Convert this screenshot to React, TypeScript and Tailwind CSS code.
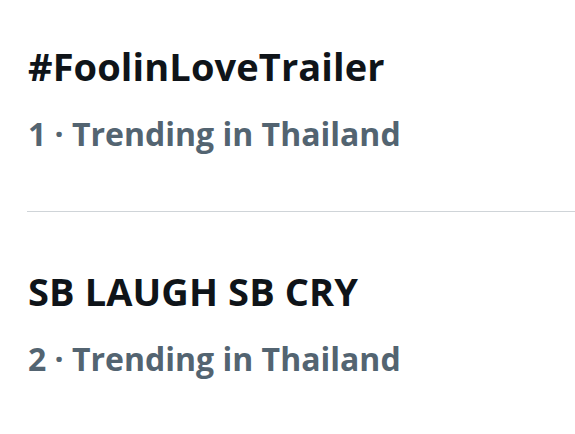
const trends = [
  { rank: 1, name: '#FoolinLoveTrailer', place: 'Thailand' },
  { rank: 2, name: 'SB LAUGH SB CRY', place: 'Thailand' },
];

function TrendItem({ rank, name, place }: { rank: number; name: string; place: string }) {
  return (
    <div className="flex flex-col pl-[28px]">
      <p className="text-[38px] leading-[48px] font-bold text-[#0f1419] tracking-[0.1px]">{name}</p>
      <p className="mt-[24px] text-[32px] leading-[40px] font-bold text-[#536471]">
        {rank} · Trending in {place}
      </p>
    </div>
  );
}

export default function App() {
  return (
    <div className="w-[575px] h-[434px] bg-white overflow-hidden pt-[42px] font-['Open_Sans',sans-serif]">
      <TrendItem {...trends[0]} />
      <div className="mt-[57px] mb-[55px] ml-[27px] h-px bg-[#cfd4d8]" />
      <TrendItem {...trends[1]} />
    </div>
  );
}
